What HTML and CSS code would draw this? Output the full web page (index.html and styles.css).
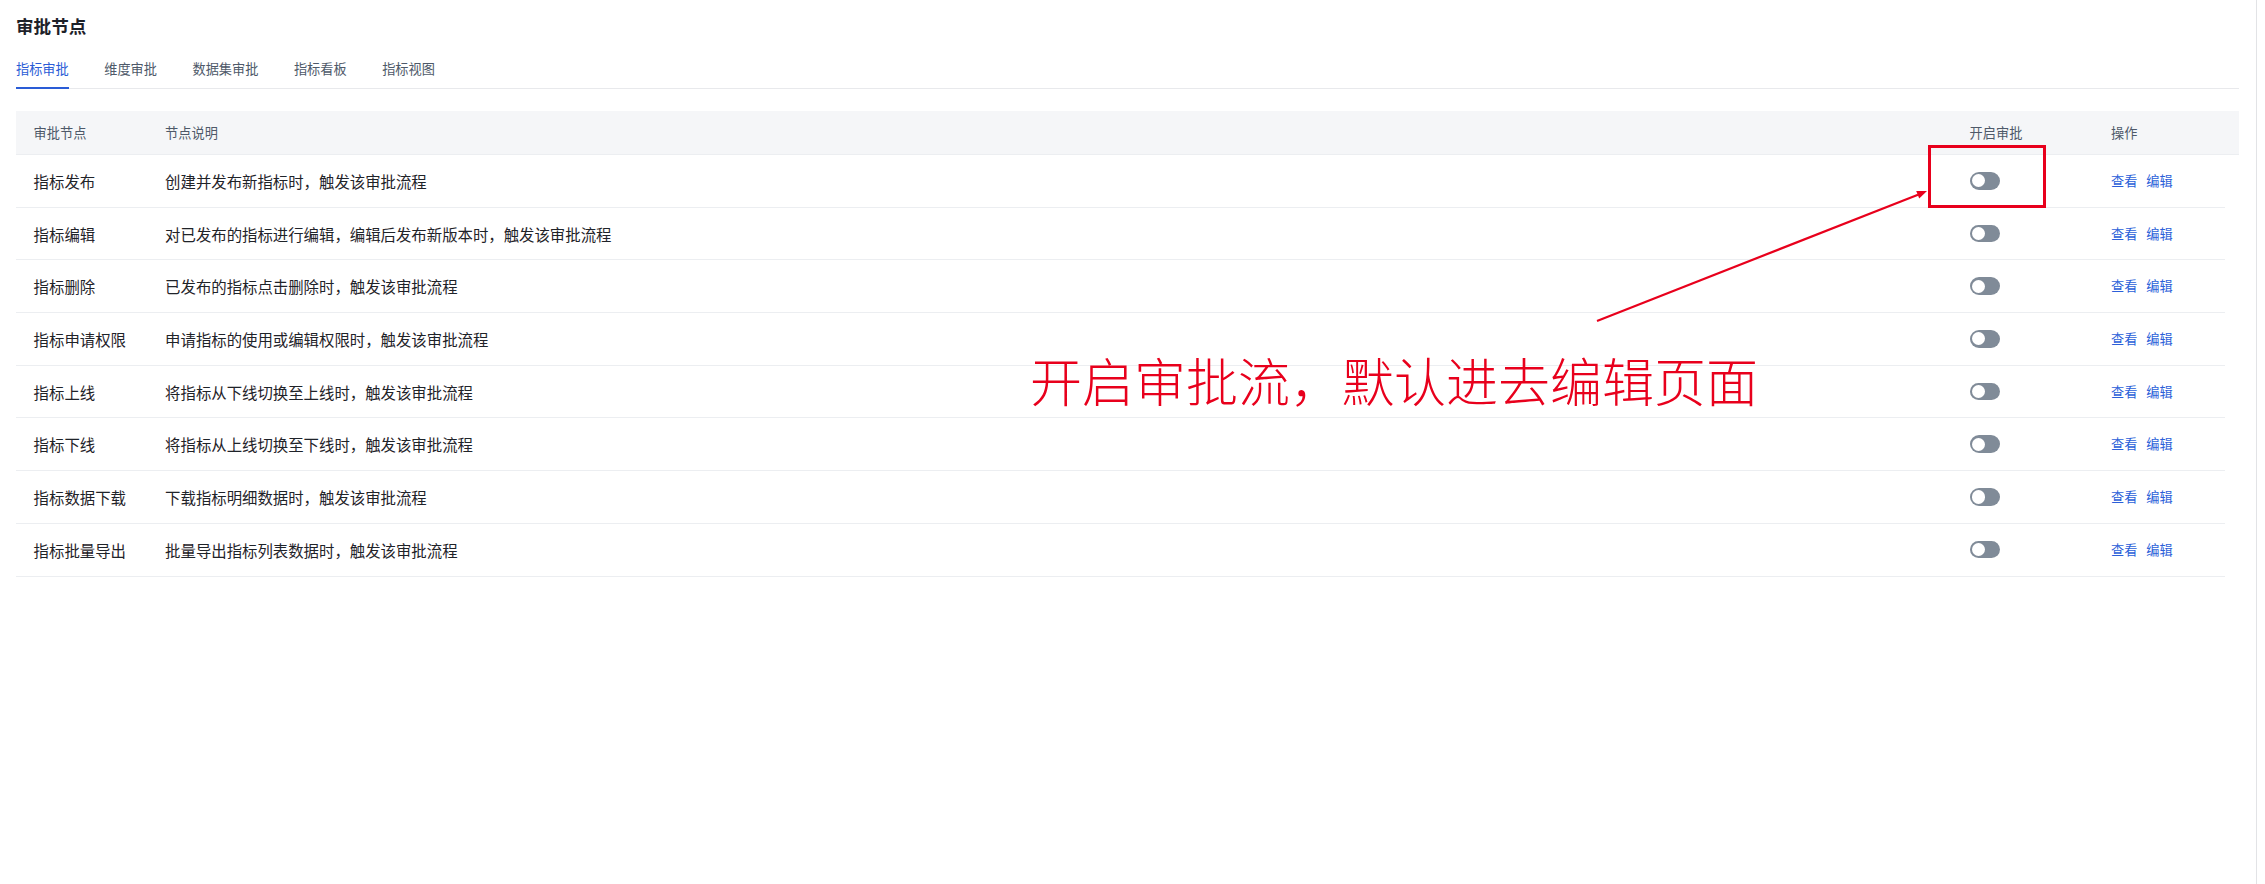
FILE: index.html
```html
<!DOCTYPE html>
<html lang="zh-CN">
<head>
    <meta charset="UTF-8">
    <meta name="viewport" content="width=device-width, initial-scale=1.0">
    <title>审批节点</title>
    <link rel="stylesheet" href="styles.css">
</head>
<body>
<div class="page">
    <div class="main">
        <!-- Title -->
        <h1 class="page-title">审批节点</h1>

        <!-- Tabs -->
        <div class="tabs">
            <div class="tab active">指标审批</div>
            <div class="tab">维度审批</div>
            <div class="tab">数据集审批</div>
            <div class="tab">指标看板</div>
            <div class="tab">指标视图</div>
        </div>

        <!-- Table -->
        <div class="table">
            <div class="table-head">
                <div class="cell">审批节点</div>
                <div class="cell">节点说明</div>
                <div class="cell">开启审批</div>
                <div class="cell">操作</div>
            </div>
            <div class="table-body">
                <div class="row">
                    <div class="cell">指标发布</div>
                    <div class="cell">创建并发布新指标时，触发该审批流程</div>
                    <div class="cell"><span class="switch"></span></div>
                    <div class="cell actions"><a href="#">查看</a><a href="#">编辑</a></div>
                </div>
                <div class="row">
                    <div class="cell">指标编辑</div>
                    <div class="cell">对已发布的指标进行编辑，编辑后发布新版本时，触发该审批流程</div>
                    <div class="cell"><span class="switch"></span></div>
                    <div class="cell actions"><a href="#">查看</a><a href="#">编辑</a></div>
                </div>
                <div class="row">
                    <div class="cell">指标删除</div>
                    <div class="cell">已发布的指标点击删除时，触发该审批流程</div>
                    <div class="cell"><span class="switch"></span></div>
                    <div class="cell actions"><a href="#">查看</a><a href="#">编辑</a></div>
                </div>
                <div class="row">
                    <div class="cell">指标申请权限</div>
                    <div class="cell">申请指标的使用或编辑权限时，触发该审批流程</div>
                    <div class="cell"><span class="switch"></span></div>
                    <div class="cell actions"><a href="#">查看</a><a href="#">编辑</a></div>
                </div>
                <div class="row">
                    <div class="cell">指标上线</div>
                    <div class="cell">将指标从下线切换至上线时，触发该审批流程</div>
                    <div class="cell"><span class="switch"></span></div>
                    <div class="cell actions"><a href="#">查看</a><a href="#">编辑</a></div>
                </div>
                <div class="row">
                    <div class="cell">指标下线</div>
                    <div class="cell">将指标从上线切换至下线时，触发该审批流程</div>
                    <div class="cell"><span class="switch"></span></div>
                    <div class="cell actions"><a href="#">查看</a><a href="#">编辑</a></div>
                </div>
                <div class="row">
                    <div class="cell">指标数据下载</div>
                    <div class="cell">下载指标明细数据时，触发该审批流程</div>
                    <div class="cell"><span class="switch"></span></div>
                    <div class="cell actions"><a href="#">查看</a><a href="#">编辑</a></div>
                </div>
                <div class="row">
                    <div class="cell">指标批量导出</div>
                    <div class="cell">批量导出指标列表数据时，触发该审批流程</div>
                    <div class="cell"><span class="switch"></span></div>
                    <div class="cell actions"><a href="#">查看</a><a href="#">编辑</a></div>
                </div>
            </div>
        </div>
    </div>

    <!-- Annotation overlay -->
    <div class="mark-box"></div>
    <svg class="mark-arrow" width="2265" height="884" viewBox="0 0 2265 884">
        <line x1="1597" y1="321" x2="1918" y2="194.7" stroke="#e8001c" stroke-width="2.2"/>
        <polygon points="1927,191 1919.2,198.4 1916.2,191" fill="#e8001c"/>
    </svg>
    <div class="mark-text">开启审批流，默认进去编辑页面</div>
</div>
</body>
</html>
```

FILE: styles.css
```css
/* Global */
* {
    margin: 0;
    padding: 0;
    box-sizing: border-box;
}

body {
    font-family: "Noto Sans CJK SC", "Noto Sans", sans-serif;
    color: #1f2329;
    background-color: #fff;
}

.page {
    position: relative;
    width: 2257px;
    min-height: 884px;
    border-right: 1px solid #e2e3e6;
}

.main {
    padding: 13px 17px 0 16px;
}

/* Title */
.page-title {
    font-size: 17.6px;
    line-height: 25px;
    font-weight: 600;
    color: #1d2129;
}

/* Tabs */
.tabs {
    display: flex;
    gap: 35.5px;
    margin-top: 11px;
    border-bottom: 1px solid #e8e9ec;
}

.tab {
    font-size: 13.2px;
    line-height: 20px;
    padding: 10px 0 8px;
    color: #4e5969;
    border-bottom: 2px solid transparent;
    margin-bottom: -1px;
}

.tab.active {
    color: #2a5cd6;
    border-bottom-color: #2a5cd6;
}

/* Table */
.table {
    margin-top: 22px;
}

.table-head,
.row {
    display: grid;
    grid-template-columns: 131.5px 1804.5px 141.5px 1fr;
    align-items: center;
}

.table-head {
    height: 44px;
    background-color: #f5f6f8;
    border-bottom: 1px solid #eceef1;
    font-size: 13.2px;
    color: #4e5969;
}

.row {
    height: 52.7px;
    margin-right: 14px;
    border-bottom: 1px solid #eceef1;
    font-size: 15.4px;
    color: #1f2329;
}

.cell {
    padding: 0 17.6px;
    line-height: 22px;
    white-space: nowrap;
}

/* Switch */
.switch {
    display: block;
    position: relative;
    width: 30.8px;
    height: 17.6px;
    border-radius: 9px;
    background-color: #808b98;
}

.switch::after {
    content: "";
    position: absolute;
    top: 2.2px;
    left: 2.2px;
    width: 13.2px;
    height: 13.2px;
    border-radius: 50%;
    background-color: #fff;
}

/* Actions */
.actions {
    display: flex;
    gap: 8.8px;
    font-size: 13.2px;
}

.actions a {
    color: #2b5fd9;
    text-decoration: none;
}

/* Annotation */
.mark-box {
    position: absolute;
    left: 1928px;
    top: 145px;
    width: 118px;
    height: 63px;
    border: 3px solid #e8001c;
}

.mark-arrow {
    position: absolute;
    left: 0;
    top: 0;
    pointer-events: none;
}

.mark-text {
    position: absolute;
    left: 1030px;
    top: 354px;
    font-size: 52px;
    line-height: 52px;
    font-weight: 300;
    color: #e8001c;
    white-space: nowrap;
}
```
